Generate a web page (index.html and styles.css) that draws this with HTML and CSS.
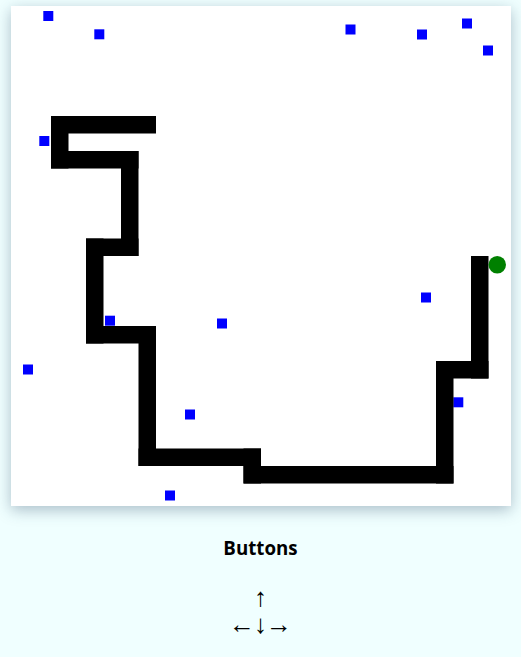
FILE: index.html
```html
<!DOCTYPE html>
<html>
<head>
<meta charset="utf-8">
<title>Snake</title>
<link rel="stylesheet" href="styles.css">
</head>
<body>
<main class="game">
  <svg class="board" width="500" height="500" viewBox="0 0 500 500" xmlns="http://www.w3.org/2000/svg">
    <g class="food" fill="#0000ff">
      <rect x="32.3" y="5" width="10" height="10"/>
      <rect x="83.3" y="23.3" width="10" height="10"/>
      <rect x="334.5" y="18.5" width="10" height="10"/>
      <rect x="406" y="23.5" width="10" height="10"/>
      <rect x="451" y="12.5" width="10" height="10"/>
      <rect x="472" y="39.5" width="10" height="10"/>
      <rect x="28.3" y="130" width="10" height="10"/>
      <rect x="410" y="286.5" width="10" height="10"/>
      <rect x="94" y="309.7" width="10" height="10"/>
      <rect x="206" y="312.5" width="10" height="10"/>
      <rect x="12" y="358.5" width="10" height="10"/>
      <rect x="442.3" y="391.3" width="10" height="10"/>
      <rect x="174" y="403.5" width="10" height="10"/>
      <rect x="154" y="484.5" width="10" height="10"/>
    </g>
    <g class="snake" fill="#000000">
      <rect x="40" y="110" width="105" height="17.5"/>
      <rect x="40" y="110" width="17.5" height="52.5"/>
      <rect x="40" y="145" width="87.5" height="17.5"/>
      <rect x="110" y="145" width="17.5" height="105"/>
      <rect x="75" y="232.5" width="52.5" height="17.5"/>
      <rect x="75" y="232.5" width="17.5" height="105"/>
      <rect x="75" y="320" width="70" height="17.5"/>
      <rect x="127.5" y="320" width="17.5" height="140"/>
      <rect x="127.5" y="442.5" width="122.5" height="17.5"/>
      <rect x="232.5" y="442.5" width="17.5" height="35"/>
      <rect x="232.5" y="460" width="210" height="17.5"/>
      <rect x="425" y="355" width="17.5" height="122.5"/>
      <rect x="425" y="355" width="52.5" height="17.5"/>
      <rect x="460" y="250" width="17.5" height="122.5"/>
    </g>
    <circle cx="486.25" cy="258.75" r="8.75" fill="#008000"/>
  </svg>
  <h3 class="title">Buttons</h3>
  <div class="controls">
    <div class="row"><span class="arrow">↑</span></div>
    <div class="row"><span class="arrow side">←</span><span class="arrow">↓</span><span class="arrow side">→</span></div>
  </div>
</main>
</body>
</html>
```
FILE: styles.css
```css
html, body {
  margin: 0;
  padding: 0;
  background: #f0ffff;
}

.game {
  padding-top: 6px;
  font-family: "Open Sans", "Noto Sans", sans-serif;
}

.board {
  display: block;
  margin: 0 10px 0 11px;
  background: #ffffff;
  box-shadow: 0 4px 14px rgba(40, 70, 100, 0.35);
}

.title {
  margin: 29px 0 0;
  text-align: center;
  font-size: 18.72px;
  font-weight: 700;
  color: #000;
  line-height: normal;
}

.controls {
  margin-top: 24px;
  font-family: "Liberation Sans", Arial, sans-serif;
  font-size: 26px;
  color: #000;
  display: flex;
  flex-direction: column;
  align-items: center;
}

.row {
  display: flex;
  justify-content: center;
  align-items: center;
  gap: 0;
  height: 27px;
  line-height: 27px;
}

.arrow {
  display: block;
}

.side {
  margin: 0 -1px;
}
```
